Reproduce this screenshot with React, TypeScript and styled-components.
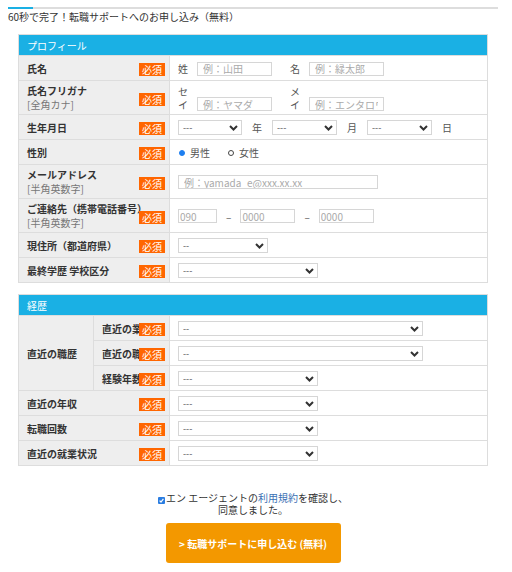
import React from "react";
import styled, { createGlobalStyle } from "styled-components";

const GlobalStyle = createGlobalStyle`
  * { box-sizing: border-box; }
  body {
    margin: 0;
    background: #fff;
    font-family: "Noto Sans CJK JP", "Noto Sans", sans-serif;
    font-size: 10px;
    color: #333;
  }
`;

const Page = styled.div`
  width: 490px;
  margin: 0 8px;
  padding-top: 7px;
`;

const Progress = styled.div`
  height: 2px;
  background: #ddd;
`;

const ProgressFill = styled.div`
  height: 2px;
  background: #1ab0e4;
`;

const Lead = styled.p`
  margin: 1px 0 0;
  font-size: 10px;
  line-height: 14px;
  color: #333;
`;

const FormTable = styled.table<{ $top: number }>`
  width: 470px;
  margin: ${(p) => p.$top}px 10px 0;
  border-collapse: collapse;
  table-layout: fixed;
  border: 1px solid #ddd;
`;

const Head = styled.th`
  height: 21px;
  padding: 0 8px;
  background: #1ab0e4;
  color: #fff;
  font-weight: 400;
  font-size: 10px;
  text-align: left;
  border: 1px solid #ddd;
`;

const Label = styled.td`
  position: relative;
  height: 25px;
  padding: 3px 8px 2px;
  background: #eee;
  border: 1px solid #ddd;
  font-weight: 700;
  font-size: 10px;
  line-height: 14px;
  color: #333;
  white-space: nowrap;
  vertical-align: middle;
`;

const Note = styled.span`
  display: block;
  font-weight: 400;
  color: #777;
`;

const Badge = styled.span`
  position: absolute;
  right: 4px;
  top: calc(50% - 5px);
  width: 26px;
  height: 13px;
  background: #ff6600;
  color: #fff;
  font-weight: 400;
  font-size: 10px;
  line-height: 13px;
  text-align: center;
`;

const Value = styled.td`
  height: 25px;
  padding: 3px 8px 2px;
  background: #fff;
  border: 1px solid #ddd;
  vertical-align: middle;
`;

const Line = styled.div<{ $align?: string }>`
  display: flex;
  align-items: ${(p) => p.$align || "center"};
  color: #555;
  font-size: 10px;
  line-height: 13px;
`;

const Prefix = styled.span`
  width: 10px;
  margin-right: 9px;
  word-break: break-all;
`;

const Group = styled.div<{ $gap?: number }>`
  display: flex;
  align-items: inherit;
  margin-left: ${(p) => p.$gap || 0}px;
`;

const TextInput = styled.input<{ $w: number; $pad?: number }>`
  width: ${(p) => p.$w}px;
  height: 14px;
  margin: 0;
  padding: 0 ${(p) => p.$pad ?? 5}px;
  border: 1px solid #d6d6d6;
  border-radius: 0;
  font-family: inherit;
  font-size: 10px;
  line-height: 12px;
  color: #333;
  outline: none;
  &::placeholder { color: #aaa; }
`;

const Dash = styled.span`
  margin: 0 9px;
  color: #555;
`;

const Unit = styled.span`
  margin: 0 10px;
  color: #555;
`;

const SelectBox = styled.div<{ $w: number }>`
  position: relative;
  width: ${(p) => p.$w}px;
  height: 15px;
`;

const Select = styled.select`
  appearance: none;
  width: 100%;
  height: 100%;
  margin: 0;
  padding: 0 14px 0 4px;
  border: 1px solid #d6d6d6;
  border-radius: 0;
  background: #fff;
  font-family: inherit;
  font-size: 9px;
  color: #555;
  outline: none;
`;

const Chevron = styled.svg`
  position: absolute;
  right: 4px;
  top: 5px;
  pointer-events: none;
`;

const Radio = styled.label`
  display: flex;
  align-items: center;
  margin-right: 17px;
  color: #555;
`;

const Dot = styled.span<{ $on?: boolean }>`
  width: 6px;
  height: 6px;
  margin: 0 5px 0 1px;
  border-radius: 50%;
  background: ${(p) => (p.$on ? "#1e7ff0" : "#fff")};
  border: 1px solid ${(p) => (p.$on ? "#1e7ff0" : "#444")};
`;

const Agree = styled.div`
  margin-top: 26px;
  text-align: center;
  font-size: 10px;
  line-height: 12px;
  color: #333;
`;

const Check = styled.span`
  display: inline-flex;
  align-items: center;
  justify-content: center;
  width: 7px;
  height: 7px;
  margin-right: 1px;
  background: #2a7de1;
  border-radius: 1px;
  vertical-align: -1px;
`;

const Link = styled.span`
  color: #3a6fb4;
`;

const Submit = styled.button`
  display: block;
  width: 175px;
  height: 40px;
  margin: 7px auto 0;
  border: none;
  border-radius: 3px;
  background: #f39800;
  color: #fff;
  font-family: inherit;
  font-weight: 700;
  font-size: 10px;
  cursor: pointer;
`;

function Dropdown({ w, value }: { w: number; value: string }) {
  return (
    <SelectBox $w={w}>
      <Select defaultValue={value}>
        <option>{value}</option>
      </Select>
      <Chevron width="9" height="6" viewBox="0 0 9 6">
        <polyline points="1,1 4.5,4.5 8,1" fill="none" stroke="#333" strokeWidth="2" />
      </Chevron>
    </SelectBox>
  );
}

function Field({ label, note, span = 1 }: { label: string; note?: string; span?: number }) {
  return (
    <Label colSpan={span}>
      {label}
      {note && <Note>{note}</Note>}
      <Badge>必須</Badge>
    </Label>
  );
}

export default function App() {
  return (
    <Page>
      <GlobalStyle />
      <Progress>
        <ProgressFill style={{ width: "25px" }} />
      </Progress>
      <Lead>60秒で完了！転職サポートへのお申し込み（無料）</Lead>

      <FormTable $top={10}>
        <colgroup>
          <col style={{ width: 151 }} />
          <col />
        </colgroup>
        <tbody>
          <tr>
            <Head colSpan={2}>プロフィール</Head>
          </tr>
          <tr>
            <Field label="氏名" />
            <Value>
              <Line>
                <Prefix>姓</Prefix>
                <TextInput $w={75} placeholder="例：山田" />
                <Group $gap={18}>
                  <Prefix>名</Prefix>
                  <TextInput $w={75} placeholder="例：緑太郎" />
                </Group>
              </Line>
            </Value>
          </tr>
          <tr>
            <Field label="氏名フリガナ" note="[全角カナ]" />
            <Value>
              <Line $align="flex-end">
                <Prefix>セイ</Prefix>
                <TextInput $w={75} placeholder="例：ヤマダ" />
                <Group $gap={18}>
                  <Prefix>メイ</Prefix>
                  <TextInput $w={75} placeholder="例：エンタロウ" />
                </Group>
              </Line>
            </Value>
          </tr>
          <tr>
            <Field label="生年月日" />
            <Value>
              <Line>
                <Dropdown w={64} value="---" />
                <Unit>年</Unit>
                <Dropdown w={65} value="---" />
                <Unit>月</Unit>
                <Dropdown w={65} value="---" />
                <Unit>日</Unit>
              </Line>
            </Value>
          </tr>
          <tr>
            <Field label="性別" />
            <Value>
              <Line>
                <Radio>
                  <Dot $on />
                  男性
                </Radio>
                <Radio>
                  <Dot />
                  女性
                </Radio>
              </Line>
            </Value>
          </tr>
          <tr>
            <Field label="メールアドレス" note="[半角英数字]" />
            <Value>
              <Line>
                <TextInput $w={200} placeholder="例：yamada_e@xxx.xx.xx" />
              </Line>
            </Value>
          </tr>
          <tr>
            <Field label="ご連絡先（携帯電話番号）" note="[半角英数字]" />
            <Value>
              <Line>
                <TextInput $w={39} $pad={1} placeholder="090" />
                <Dash>–</Dash>
                <TextInput $w={55} $pad={1} placeholder="0000" />
                <Dash>–</Dash>
                <TextInput $w={55} $pad={1} placeholder="0000" />
              </Line>
            </Value>
          </tr>
          <tr>
            <Field label="現住所（都道府県）" />
            <Value>
              <Line>
                <Dropdown w={90} value="--" />
              </Line>
            </Value>
          </tr>
          <tr>
            <Field label="最終学歴 学校区分" />
            <Value>
              <Line>
                <Dropdown w={140} value="---" />
              </Line>
            </Value>
          </tr>
        </tbody>
      </FormTable>

      <FormTable $top={11}>
        <colgroup>
          <col style={{ width: 75 }} />
          <col style={{ width: 76 }} />
          <col />
        </colgroup>
        <tbody>
          <tr>
            <Head colSpan={3}>経歴</Head>
          </tr>
          <tr>
            <Label rowSpan={3}>直近の職歴</Label>
            <Field label="直近の業種" />
            <Value>
              <Line>
                <Dropdown w={245} value="--" />
              </Line>
            </Value>
          </tr>
          <tr>
            <Field label="直近の職種" />
            <Value>
              <Line>
                <Dropdown w={245} value="--" />
              </Line>
            </Value>
          </tr>
          <tr>
            <Field label="経験年数" />
            <Value>
              <Line>
                <Dropdown w={140} value="---" />
              </Line>
            </Value>
          </tr>
          <tr>
            <Field label="直近の年収" span={2} />
            <Value>
              <Line>
                <Dropdown w={140} value="---" />
              </Line>
            </Value>
          </tr>
          <tr>
            <Field label="転職回数" span={2} />
            <Value>
              <Line>
                <Dropdown w={140} value="---" />
              </Line>
            </Value>
          </tr>
          <tr>
            <Field label="直近の就業状況" span={2} />
            <Value>
              <Line>
                <Dropdown w={140} value="---" />
              </Line>
            </Value>
          </tr>
        </tbody>
      </FormTable>

      <Agree>
        <Check>
          <svg width="5" height="5" viewBox="0 0 5 5">
            <polyline points="0.6,2.6 2,4 4.4,0.9" fill="none" stroke="#fff" strokeWidth="1.2" />
          </svg>
        </Check>
        エン エージェントの<Link>利用規約</Link>を確認し、
        <br />
        同意しました。
      </Agree>
      <Submit type="button">&gt; 転職サポートに申し込む (無料)</Submit>
    </Page>
  );
}
